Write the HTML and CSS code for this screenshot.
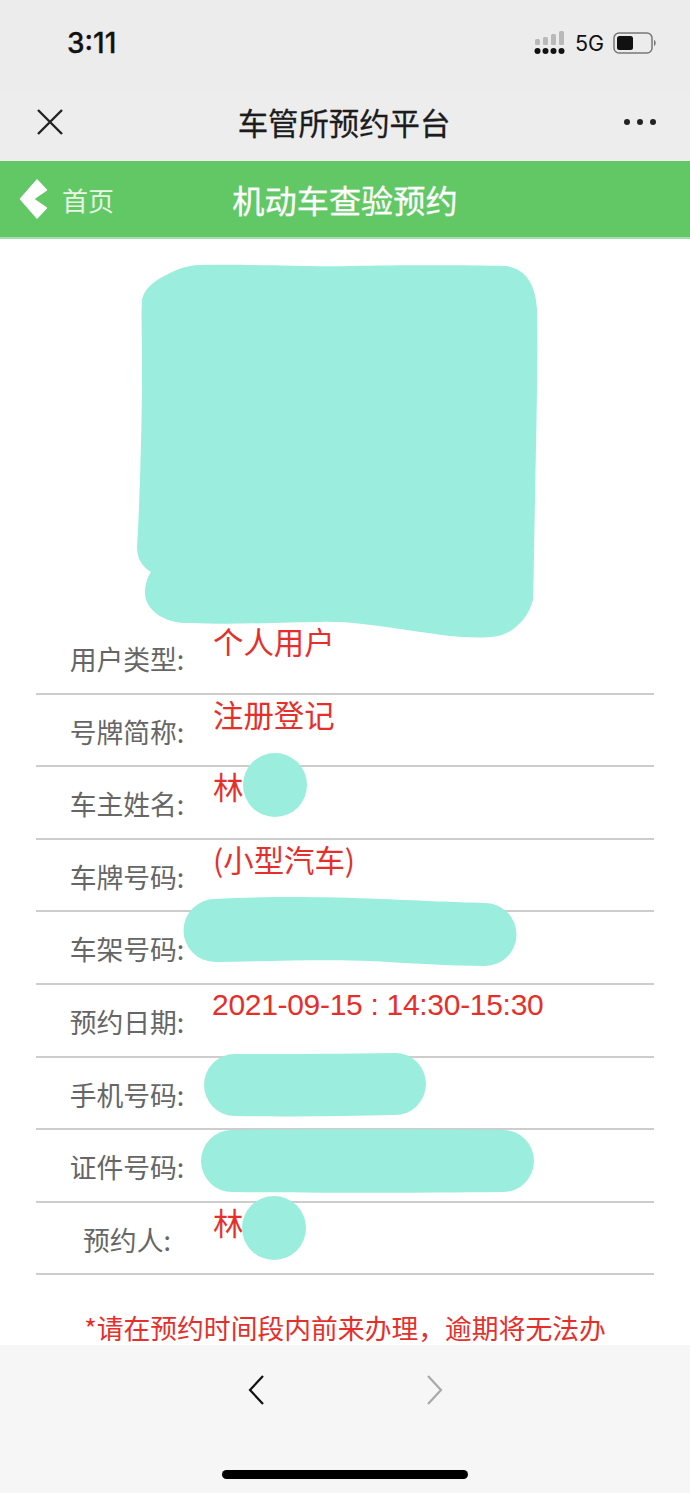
FILE: index.html
```html
<!DOCTYPE html>
<html lang="zh-CN">

<head>
    <meta charset="UTF-8">
    <meta name="viewport" content="width=device-width, initial-scale=1.0">
    <title>机动车查验预约</title>
    <link rel="stylesheet" href="styles.css">
</head>

<body>
    <div class="screen">
        <div class="status-bar">
            <span class="time">3:11</span>
            <div class="status-icons">
                <svg class="signal" width="32" height="24" viewBox="0 0 32 24">
                    <g fill="#b9b9b9">
                        <rect x="1" y="8" width="5" height="6" rx="1.5"/>
                        <rect x="9" y="6" width="5" height="8" rx="1.5"/>
                        <rect x="17" y="3" width="5" height="11" rx="1.5"/>
                        <rect x="25" y="0" width="5" height="14" rx="1.5"/>
                    </g>
                    <g fill="#111">
                        <circle cx="3.5" cy="20" r="3"/>
                        <circle cx="11.5" cy="20" r="3"/>
                        <circle cx="19.5" cy="20" r="3"/>
                        <circle cx="27.5" cy="20" r="3"/>
                    </g>
                </svg>
                <span class="network">5G</span>
                <svg class="battery" width="44" height="22" viewBox="0 0 44 22">
                    <rect x="1" y="1" width="38" height="20" rx="5" fill="none" stroke="#777" stroke-width="1.5"/>
                    <rect x="4" y="4" width="16" height="14" rx="2.5" fill="#111"/>
                    <path d="M41 8c2 .5 2.5 5 0 6z" fill="#777"/>
                </svg>
            </div>
        </div>

        <div class="nav-bar">
            <svg class="close-icon" width="28" height="28" viewBox="0 0 28 28">
                <path d="M2 2l24 24M26 2L2 26" fill="none" stroke="#222" stroke-width="2.4"/>
            </svg>
            <span class="nav-title">车管所预约平台</span>
            <svg class="more-icon" width="32" height="6" viewBox="0 0 32 6">
                <circle cx="3" cy="3" r="3" fill="#222"/>
                <circle cx="16" cy="3" r="3" fill="#222"/>
                <circle cx="29" cy="3" r="3" fill="#222"/>
            </svg>
        </div>

        <header class="page-header">
            <a class="home-link" href="#">
                <svg class="home-arrow" width="30" height="44" viewBox="0 0 30 44">
                    <path d="M2 22L19 2.500l10 10.500-13 9 13 9-10 10.500z" fill="#fff" stroke="#fff" stroke-width="1" stroke-linejoin="round"/>
                </svg>
                <span>首页</span>
            </a>
            <h1>机动车查验预约</h1>
        </header>

        <main class="content">
            <div class="photo"></div>
            <ul class="info-list">
                <li class="info-row"><span class="info-label">用户类型:</span><span class="info-value">个人用户</span></li>
                <li class="info-row"><span class="info-label">号牌简称:</span><span class="info-value">注册登记</span></li>
                <li class="info-row"><span class="info-label">车主姓名:</span><span class="info-value">林</span></li>
                <li class="info-row"><span class="info-label">车牌号码:</span><span class="info-value">(小型汽车)</span></li>
                <li class="info-row"><span class="info-label">车架号码:</span><span class="info-value"></span></li>
                <li class="info-row"><span class="info-label">预约日期:</span><span class="info-value date">2021-09-15 : 14:30-15:30</span></li>
                <li class="info-row"><span class="info-label">手机号码:</span><span class="info-value"></span></li>
                <li class="info-row"><span class="info-label">证件号码:</span><span class="info-value"></span></li>
                <li class="info-row"><span class="info-label">预约人:</span><span class="info-value">林</span></li>
            </ul>
            <p class="notice">*请在预约时间段内前来办理，逾期将无法办</p>
        </main>

        <!-- painted over the private data in the screenshot -->
        <svg class="scribbles" width="690" height="1493" viewBox="0 0 690 1493">
            <g fill="#9beede">
                <path d="M197 265C260 264 300 267 350 266S470 265 505 266C525 268 536 284 537 310C538 370 536 450 535 500S534 570 533 600C528 618 515 632 498 636C470 641 430 633 400 629C370 625 345 621 320 622C290 622 235 625 190 623C165 624 145 610 145 593C145 584 148 576 151 572C142 567 137 558 137 547C140 500 142 420 142 370S141 320 142 300C145 286 158 279 170 273C180 268 188 266 197 265Z"/>
                <circle cx="275" cy="785" r="32"/>
                <path d="M215 899C270 896 330 897 380 899S450 902 485 903A31.500 31.500 0 0 1 485 966C450 966 410 963 370 961S270 961 215 962A31.500 31.500 0 0 1 215 899Z"/>
                <path d="M235 1054C280 1054 340 1054 395 1053A31 31 0 0 1 395 1115C350 1116 290 1117 235 1116A31 31 0 0 1 235 1054Z"/>
                <path d="M232 1130C300 1129 420 1129 503 1130A31 31 0 0 1 503 1192C420 1193 300 1193 232 1192A31 31 0 0 1 232 1130Z"/>
                <circle cx="274" cy="1228" r="32"/>
            </g>
        </svg>

        <footer class="toolbar">
            <div class="toolbar-buttons">
                <svg width="16" height="30" viewBox="0 0 16 30">
                    <path d="M15 1L2 15l13 14" fill="none" stroke="#111" stroke-width="2.2"/>
                </svg>
                <svg width="16" height="30" viewBox="0 0 16 30">
                    <path d="M1 1l13 14L1 29" fill="none" stroke="#a9a9a9" stroke-width="2.2"/>
                </svg>
            </div>
            <div class="home-bar"></div>
        </footer>
    </div>
</body>

</html>
```

FILE: styles.css
```css
/* Estilos básicos */
body {
    margin: 0;
    padding: 0;
    background-color: #fff;
    font-family: "Noto Sans CJK SC", "Liberation Sans", sans-serif;
}

.screen {
    position: relative;
    display: flex;
    flex-direction: column;
    width: 690px;
    height: 1493px;
    overflow: hidden;
}

/* status bar */
.status-bar {
    display: flex;
    justify-content: space-between;
    align-items: center;
    box-sizing: border-box;
    height: 90px;
    padding: 0 33px 4px 67px;
    background-color: #ececec;
}

.time {
    font-family: Inter, "Liberation Sans", sans-serif;
    font-size: 28px;
    font-weight: 500;
    -webkit-text-stroke: 0.3px #111;
    color: #111;
}

.status-icons {
    display: flex;
    align-items: center;
    gap: 9px;
}

.network {
    font-family: Inter, "Liberation Sans", sans-serif;
    font-size: 21.5px;
    color: #111;
}

/* wechat title bar */
.nav-bar {
    display: flex;
    justify-content: space-between;
    align-items: center;
    box-sizing: border-box;
    height: 71px;
    padding: 0 34px 8px 36px;
    background-color: #ededed;
}

.nav-title {
    font-size: 30.4px;
    line-height: 40px;
    -webkit-text-stroke: 0.3px #1c1c1c;
    color: #1c1c1c;
}

/* green header */
.page-header {
    position: relative;
    display: flex;
    justify-content: center;
    align-items: center;
    height: 76px;
    background-color: #62c865;
    border-bottom: 2px solid #a6dda8;
}

.page-header h1 {
    margin: 0;
    font-size: 32.2px;
    font-weight: 400;
    -webkit-text-stroke: 0.3px #fff;
    color: #fff;
}

.home-link {
    position: absolute;
    left: 18px;
    top: 16px;
    display: flex;
    align-items: center;
    gap: 14px;
    font-size: 26px;
    color: #e8f6e6;
    text-decoration: none;
}

/* content */
.content {
    flex: 1;
    min-height: 0;
    background-color: #fff;
}

.photo {
    height: 383px;
}

.info-list {
    margin: 0 36px;
    padding: 0;
    list-style: none;
}

.info-row {
    display: flex;
    align-items: flex-start;
    box-sizing: border-box;
    height: 72.6px;
    border-bottom: 2px solid #cdcdcd;
}

.info-label {
    box-sizing: border-box;
    flex: none;
    width: 177px;
    padding: 15px 0 0 5px;
    font-size: 26.8px;
    line-height: 44px;
    text-align: center;
    color: #666;
}

.info-value {
    font-size: 30.4px;
    line-height: 38px;
    color: #e62f2b;
}

.date {
    margin-left: -1px;
    font-family: "Liberation Sans", sans-serif;
    font-size: 30px;
    line-height: 40px;
    letter-spacing: -0.3px;
}

.notice {
    margin: 36px 0 0;
    font-size: 26.8px;
    line-height: 33px;
    text-align: center;
    white-space: nowrap;
    color: #e62f2b;
}

.scribbles {
    position: absolute;
    left: 0;
    top: 0;
    pointer-events: none;
}

/* bottom toolbar */
.toolbar {
    display: flex;
    flex-direction: column;
    align-items: center;
    height: 148px;
    background-color: #f6f6f6;
}

.toolbar-buttons {
    display: flex;
    gap: 163px;
    margin-top: 30px;
}

.home-bar {
    width: 246px;
    height: 9px;
    margin-top: 65px;
    border-radius: 5px;
    background-color: #000;
}
```
